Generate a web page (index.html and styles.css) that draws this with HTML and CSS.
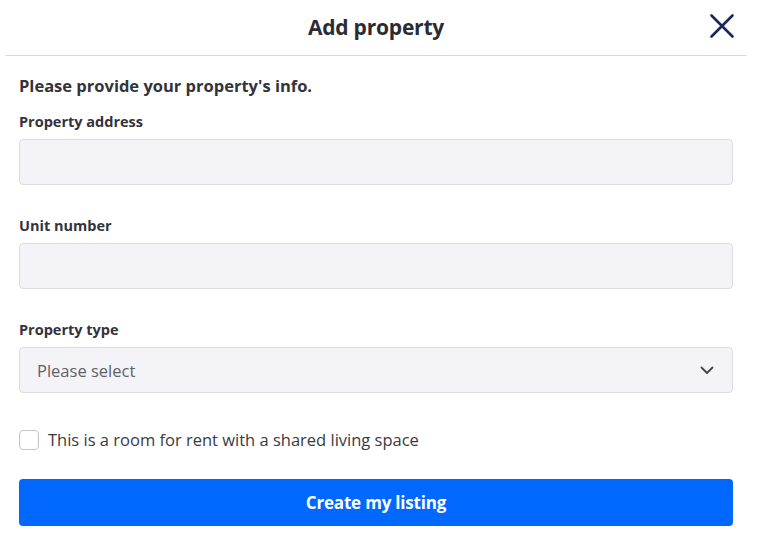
FILE: index.html
```html
<!DOCTYPE html>
<html>
<head>
<meta charset="utf-8">
<link rel="stylesheet" href="styles.css">
</head>
<body>
<div class="modal">
  <header class="header">
    <h1 class="title">Add property</h1>
    <button class="close" aria-label="Close">
      <svg width="26" height="26" viewBox="0 0 26 26"><path d="M2.5 2.5 L23.5 23.5 M23.5 2.5 L2.5 23.5" stroke="#17275a" stroke-width="2.6" fill="none" stroke-linecap="round"/></svg>
    </button>
  </header>
  <form class="form">
    <p class="intro">Please provide your property's info.</p>
    <div class="field">
      <label class="label">Property address</label>
      <div class="input"></div>
    </div>
    <div class="field">
      <label class="label">Unit number</label>
      <div class="input"></div>
    </div>
    <div class="field">
      <label class="label">Property type</label>
      <div class="input select">
        <span class="placeholder">Please select</span>
        <svg width="14" height="9" viewBox="0 0 14 9"><path d="M1.5 1.5 L7 7 L12.5 1.5" stroke="#444" stroke-width="1.8" fill="none" stroke-linecap="round" stroke-linejoin="round"/></svg>
      </div>
    </div>
    <label class="check">
      <span class="box"></span>
      <span class="check-text">This is a room for rent with a shared living space</span>
    </label>
    <button type="button" class="submit">Create my listing</button>
  </form>
</div>
</body>
</html>
```
FILE: styles.css
```css
* { box-sizing: border-box; }
html, body { margin: 0; padding: 0; background: #fff; }
body { font-family: "Open Sans", "Noto Sans", sans-serif; color: #2e2e38; }
.modal { width: 747px; padding: 0 0 0 5px; }
.header {
  position: relative;
  height: 56px;
  border-bottom: 1px solid #d8d8dc;
  display: flex;
  align-items: center;
  justify-content: center;
}
.title {
  margin: 0;
  font-size: 21px;
  font-weight: 700;
  color: #2b2b33;
  letter-spacing: -0.2px;
  padding-bottom: 2px;
}
.close {
  position: absolute;
  right: 12px;
  top: 13px;
  border: 0;
  background: none;
  padding: 0;
  width: 26px;
  height: 26px;
  cursor: pointer;
}
.close svg { display: block; }
.form { padding: 0 14px; display: flex; flex-direction: column; }
.intro {
  margin: 19px 0 0;
  font-size: 16.5px;
  font-weight: 700;
  color: #33333b;
  line-height: 22px;
}
.field { display: flex; flex-direction: column; }
.label {
  font-size: 14.5px;
  font-weight: 700;
  color: #33333b;
  line-height: 20px;
  margin-top: 16px;
  margin-bottom: 7px;
}
.field + .field .label { margin-top: 31px; }
.intro + .field .label { margin-top: 15px; }
.input {
  height: 46px;
  background: #f4f4f8;
  border: 1px solid #dcdce2;
  border-radius: 4px;
}
.select {
  display: flex;
  align-items: center;
  justify-content: space-between;
  padding: 0 18px 0 17px;
}
.placeholder { font-size: 16.5px; color: #60606a; }
.check {
  display: flex;
  align-items: center;
  gap: 9px;
  margin-top: 36px;
  line-height: 22px;
}
.box {
  width: 20px;
  height: 20px;
  border: 1.5px solid #c4c4cc;
  border-radius: 4px;
  background: #fff;
}
.check-text { font-size: 16.5px; color: #3a3a42; }
.submit {
  margin-top: 28px;
  height: 47px;
  border: 0;
  border-radius: 4px;
  background: #0068ff;
  color: #fff;
  font-family: "Open Sans", "Noto Sans", sans-serif;
  font-size: 17px;
  font-weight: 700;
  letter-spacing: -0.2px;
}
```
